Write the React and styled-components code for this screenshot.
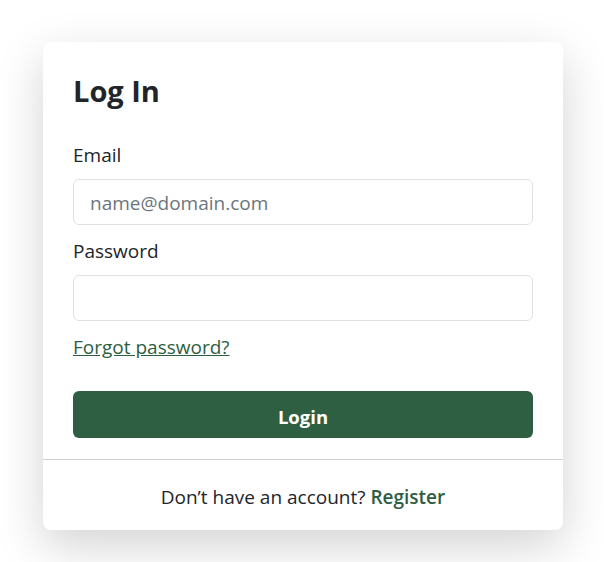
import React from "react";
import styled, { createGlobalStyle } from "styled-components";

const GlobalStyle = createGlobalStyle`
  * {
    box-sizing: border-box;
  }
  body {
    margin: 0;
    background: #ffffff;
    font-family: "Open Sans", "Noto Sans", sans-serif;
    color: #212529;
  }
`;

const S = {
  Page: styled.div`
    display: flex;
    justify-content: center;
    padding: 42px 0 32px 2px;
  `,
  Card: styled.div`
    width: 520px;
    background: #fff;
    border-radius: 8px;
    box-shadow: 0 16px 48px rgba(0, 0, 0, 0.175);
    overflow: hidden;
  `,
  Body: styled.form`
    display: flex;
    flex-direction: column;
    padding: 30.5px 30px 21px;
  `,
  Title: styled.h3`
    margin: 0 0 33px;
    font-size: 29px;
    font-weight: 700;
    line-height: 35px;
    color: #212529;
  `,
  Field: styled.div`
    display: flex;
    flex-direction: column;
    margin-bottom: ${(p) => p.$gap || 0}px;
  `,
  Label: styled.label`
    font-size: 19px;
    line-height: 28px;
    margin-bottom: 10px;
    color: #212529;
  `,
  Input: styled.input`
    height: 46px;
    width: 100%;
    padding: 3px 16px 0;
    font-family: inherit;
    font-size: 19px;
    color: #212529;
    border: 1px solid #dee2e6;
    border-radius: 6px;
    outline: none;
    &::placeholder {
      color: #6c757d;
    }
  `,
  Forgot: styled.a`
    align-self: flex-start;
    margin-top: 12px;
    font-size: 19px;
    line-height: 28px;
    color: #2e5e41;
    text-decoration: underline;
    cursor: pointer;
  `,
  Button: styled.button`
    margin-top: 30.5px;
    height: 47px;
    width: 100%;
    padding: 3px 0 0;
    border: none;
    border-radius: 6px;
    background: #2f5f42;
    color: #fff;
    font-family: inherit;
    font-size: 18.5px;
    font-weight: 700;
    cursor: pointer;
  `,
  Footer: styled.div`
    border-top: 1px solid #cfcfcf;
    padding: 22.5px 30px 19.5px;
    text-align: center;
    font-size: 19px;
    line-height: 28px;
    color: #212529;
  `,
  Register: styled.a`
    color: #2e5e41;
    font-weight: 600;
    text-decoration: none;
    cursor: pointer;
  `,
};

const App = () => {
  return (
    <S.Page>
      <GlobalStyle />
      <S.Card>
        <S.Body onSubmit={(e) => e.preventDefault()}>
          <S.Title>Log In</S.Title>
          <S.Field $gap={12}>
            <S.Label htmlFor="email">Email</S.Label>
            <S.Input id="email" type="email" placeholder="name@domain.com" />
          </S.Field>
          <S.Field>
            <S.Label htmlFor="password">Password</S.Label>
            <S.Input id="password" type="password" />
          </S.Field>
          <S.Forgot>Forgot password?</S.Forgot>
          <S.Button type="submit">Login</S.Button>
        </S.Body>
        <S.Footer>
          Don’t have an account? <S.Register>Register</S.Register>
        </S.Footer>
      </S.Card>
    </S.Page>
  );
};

export default App;
